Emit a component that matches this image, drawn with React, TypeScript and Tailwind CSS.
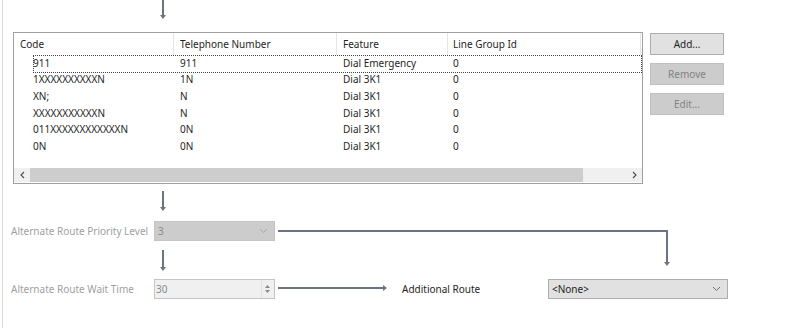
import React from "react";

const rows = [
  ["911", "911", "Dial Emergency", "0"],
  ["1XXXXXXXXXXN", "1N", "Dial 3K1", "0"],
  ["XN;", "N", "Dial 3K1", "0"],
  ["XXXXXXXXXXXN", "N", "Dial 3K1", "0"],
  ["011XXXXXXXXXXXXN", "0N", "Dial 3K1", "0"],
  ["0N", "0N", "Dial 3K1", "0"],
];

function DownArrow({ h }: { h: number }) {
  return (
    <svg width="10" height={h} viewBox={`0 0 10 ${h}`} className="block">
      <line x1="5" y1="0" x2="5" y2={h - 3} stroke="#6b7480" strokeWidth="2" />
      <polygon points={`2,${h - 4} 8,${h - 4} 5,${h}`} fill="#6b7480" />
    </svg>
  );
}

function Chevron({ color }: { color: string }) {
  return (
    <svg width="9" height="6" viewBox="0 0 9 6">
      <polyline points="1,1 4.5,4.5 8,1" fill="none" stroke={color} strokeWidth="1" />
    </svg>
  );
}

export default function App() {
  const font = { fontFamily: '"Noto Sans", "Open Sans", sans-serif' };
  return (
    <div className="relative w-[800px] h-[328px] bg-white overflow-hidden text-[10px] text-[#1e1e1e] whitespace-nowrap" style={font}>
      <div className="absolute left-[2px] top-0 bottom-0 w-px bg-[#dcdcdc]" />
      <div className="flex flex-col pl-[13px]">
        {/* top arrow */}
        <div className="h-[32px] pl-[145px]">
          <DownArrow h={19} />
        </div>
        {/* table + buttons */}
        <div className="flex gap-[7px]">
          <div className="w-[630px] h-[152px] border border-[#a0a0a0] flex flex-col">
            <div className="flex h-[22px] items-center">
              <div className="w-[160px] pl-[6px] h-full flex items-center border-r border-[#e5e5e5]">Code</div>
              <div className="w-[163px] pl-[6px] h-full flex items-center border-r border-[#e5e5e5]">Telephone Number</div>
              <div className="w-[111px] pl-[6px] h-full flex items-center border-r border-[#e5e5e5]">Feature</div>
              <div className="w-[193px] pl-[5px] h-full flex items-center border-r border-[#e5e5e5]">Line Group Id</div>
            </div>
            <div className="flex-1">
              {rows.map((r, i) => (
                <div key={i} className="relative flex h-[16.6px] items-center">
                  {i === 0 && (
                    <div className="absolute left-[19px] right-0 top-0 bottom-[-1px] border border-dotted border-[#444]" />
                  )}
                  <div className="w-[160px] pl-[19px]">{r[0]}</div>
                  <div className="w-[163px] pl-[6px]">{r[1]}</div>
                  <div className="w-[111px] pl-[6px]">{r[2]}</div>
                  <div className="pl-[5px]">{r[3]}</div>
                </div>
              ))}
            </div>
            <div className="h-[14px] mb-px flex items-center bg-[#f0f0f0]">
              <div className="w-[16px] flex justify-center text-[#606060]">
                <svg width="5" height="8" viewBox="0 0 5 8"><polyline points="4,1 1,4 4,7" fill="none" stroke="#505050" strokeWidth="1.2" /></svg>
              </div>
              <div className="w-[553px] h-full bg-[#cdcdcd]" />
              <div className="flex-1" />
              <div className="w-[16px] flex justify-center">
                <svg width="5" height="8" viewBox="0 0 5 8"><polyline points="1,1 4,4 1,7" fill="none" stroke="#505050" strokeWidth="1.2" /></svg>
              </div>
            </div>
          </div>
          <div className="flex flex-col gap-[8px] pt-px">
            <div className="w-[74px] h-[22px] flex items-center justify-center bg-[#e1e1e1] border border-[#adadad] text-[#1e1e1e]">Add...</div>
            <div className="w-[74px] h-[22px] flex items-center justify-center bg-[#cccccc] border border-[#bfbfbf] text-[#838383]">Remove</div>
            <div className="w-[74px] h-[22px] flex items-center justify-center bg-[#cccccc] border border-[#bfbfbf] text-[#838383]">Edit...</div>
          </div>
        </div>
        {/* arrow 2 */}
        <div className="h-[37px] pl-[145px] pt-[7px]">
          <DownArrow h={20} />
        </div>
        {/* priority level */}
        <div className="flex items-center h-[20px] -ml-[2px]">
          <div className="w-[143px] text-[#a0a0a0]">Alternate Route Priority Level</div>
          <div className="w-[121px] h-[20px] bg-[#cccccc] border border-[#c4c4c4] flex items-center justify-between pl-[3px] pr-[6px] text-[#8a8a8a]">
            <span>3</span>
            <Chevron color="#a8a8a8" />
          </div>
        </div>
        {/* arrow 3 */}
        <div className="h-[38px] pl-[145px] pt-[9px]">
          <DownArrow h={21} />
        </div>
        {/* wait time */}
        <div className="flex items-center h-[20px] -ml-[2px]">
          <div className="w-[143px] text-[#a0a0a0]">Alternate Route Wait Time</div>
          <div className="w-[121px] h-[20px] bg-[#f0f0f0] border border-[#c4c4c4] flex items-center justify-between pl-[1px] pr-[2px] text-[#8a8a8a]">
            <span>30</span>
            <div className="flex flex-col items-center justify-center h-full gap-[2px] w-[11px] border-l border-[#e0e0e0]">
              <svg width="5" height="3" viewBox="0 0 5 3"><polygon points="0,3 5,3 2.5,0" fill="#8a8a8a" /></svg>
              <svg width="5" height="3" viewBox="0 0 5 3"><polygon points="0,0 5,0 2.5,3" fill="#8a8a8a" /></svg>
            </div>
          </div>
          <div className="w-[127px]" />
          <div className="w-[146px] text-[#1e1e1e]">Additional Route</div>
          <div className="w-[180px] h-[20px] bg-[#e1e1e1] border border-[#adadad] flex items-center justify-between pl-[3px] pr-[6px] text-[#1e1e1e]">
            <span>&lt;None&gt;</span>
            <Chevron color="#707070" />
          </div>
        </div>
      </div>
      {/* connector overlays */}
      <svg className="absolute left-0 top-0 pointer-events-none" width="800" height="328">
        <polyline points="278,231 667,231 667,262" fill="none" stroke="#6b7480" strokeWidth="2" />
        <polygon points="664,262 670,262 667,266" fill="#6b7480" />
        <line x1="278" y1="288" x2="383" y2="288" stroke="#6b7480" strokeWidth="2" />
        <polygon points="383,285 383,291 387,288" fill="#6b7480" />
      </svg>
    </div>
  );
}
